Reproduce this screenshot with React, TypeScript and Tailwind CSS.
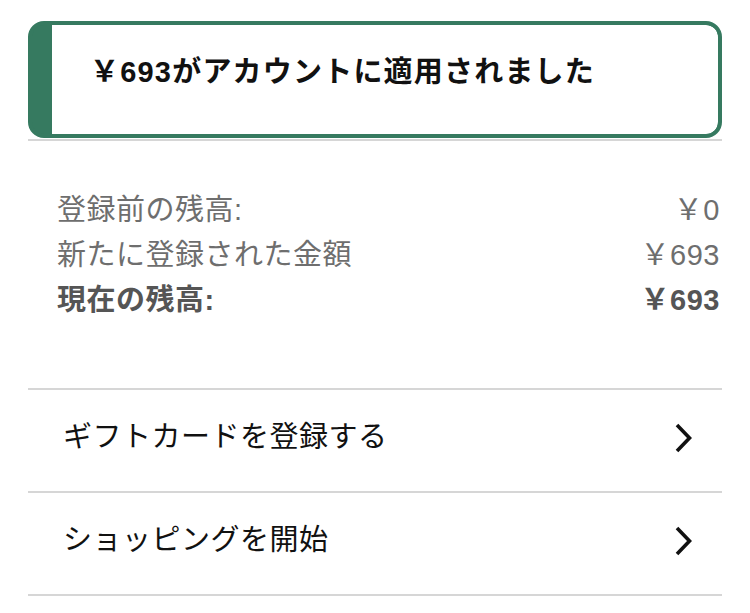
import React from 'react';

const rows = [
  { label: '登録前の残高:', value: '￥0', bold: false },
  { label: '新たに登録された金額', value: '￥693', bold: false },
  { label: '現在の残高:', value: '￥693', bold: true },
];

const links = ['ギフトカードを登録する', 'ショッピングを開始'];

const Chevron = () => (
  <svg width="18" height="30" viewBox="0 0 18 30" fill="none">
    <path d="M3 2 L15.5 15 L3 28" stroke="#111" strokeWidth="3.6" />
  </svg>
);

export default function App() {
  return (
    <div
      className="w-[750px] h-[613px] bg-white px-[28px] pt-[21px] overflow-hidden"
      style={{ fontFamily: '"Liberation Sans", "Noto Sans CJK JP", sans-serif' }}
    >
      {/* Alert */}
      <div className="h-[117px] flex rounded-[16px] border-4 border-[#367a60] bg-[#367a60] overflow-hidden">
        <div className="w-[20px] shrink-0" />
        <div className="flex-1 bg-white rounded-r-[12px] pl-[38px] pt-[27px]">
          <p className="text-[29px] leading-[40px] font-bold text-[#111] tracking-[1.2px]">
            ￥693がアカウントに適用されました
          </p>
        </div>
      </div>
      <div className="h-[2px] bg-[#d6d6d6] mt-[1px]" />

      {/* Balance */}
      <div className="pt-[47px] pl-[29px] pr-[2px] pb-[65px]">
        {rows.map((r) => (
          <div
            key={r.label}
            className={`flex justify-between text-[29px] leading-[45px] tracking-[0.5px] ${
              r.bold ? 'font-bold text-[#555]' : 'text-[#6e6e6e]'
            }`}
          >
            <span>{r.label}</span>
            <span>{r.value}</span>
          </div>
        ))}
      </div>

      {/* Links */}
      <div className="border-t-2 border-[#d6d6d6]">
        {links.map((l) => (
          <div
            key={l}
            className="h-[103px] flex items-center justify-between pl-[35px] pr-[30px] pb-[6px] border-b-2 border-[#d6d6d6]"
          >
            <span className="text-[29px] tracking-[0.5px] text-[#111]">{l}</span>
            <Chevron />
          </div>
        ))}
      </div>
    </div>
  );
}
